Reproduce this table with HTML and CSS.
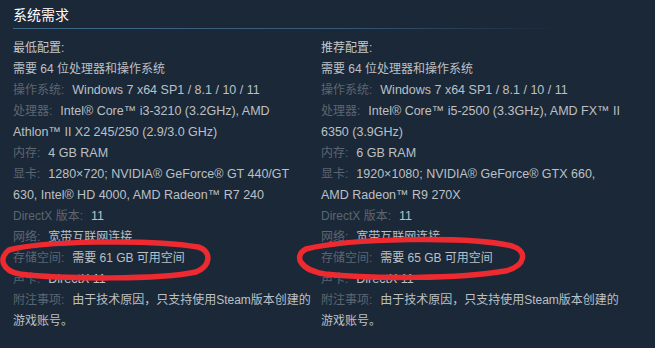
FILE: index.html
```html
<!DOCTYPE html>
<html lang="zh-CN">
<head>
<meta charset="utf-8">
<title>系统需求</title>
<link rel="stylesheet" href="styles.css">
</head>
<body>
<div class="sysreq">
  <h2 class="title">系统需求</h2>
  <div class="cols">
    <div class="col">
      <ul class="reqs">
        <li class="head">最低配置:</li>
        <li class="zh">需要 64 位处理器和操作系统</li>
        <li><span class="lbl">操作系统:</span> Windows 7 x64 SP1 / 8.1 / 10 / 11</li>
        <li><span class="lbl">处理器:</span> Intel® Core™ i3-3210 (3.2GHz), AMD Athlon™ II X2 245/250 (2.9/3.0 GHz)</li>
        <li><span class="lbl">内存:</span> 4 GB RAM</li>
        <li><span class="lbl">显卡:</span> 1280×720; NVIDIA® GeForce® GT 440/GT 630, Intel® HD 4000, AMD Radeon™ R7 240</li>
        <li><span class="lbl">DirectX 版本:</span> 11</li>
        <li class="zh"><span class="lbl">网络:</span> 宽带互联网连接</li>
        <li class="zh"><span class="lbl">存储空间:</span> 需要 61 GB 可用空间</li>
        <li><span class="lbl">声卡:</span> DirectX 11</li>
        <li class="zh"><span class="lbl">附注事项:</span> 由于技术原因，只支持使用Steam版本创建的游戏账号。</li>
      </ul>
    </div>
    <div class="col">
      <ul class="reqs">
        <li class="head">推荐配置:</li>
        <li class="zh">需要 64 位处理器和操作系统</li>
        <li><span class="lbl">操作系统:</span> Windows 7 x64 SP1 / 8.1 / 10 / 11</li>
        <li><span class="lbl">处理器:</span> Intel® Core™ i5-2500 (3.3GHz), AMD FX™ II 6350 (3.9GHz)</li>
        <li><span class="lbl">内存:</span> 6 GB RAM</li>
        <li><span class="lbl">显卡:</span> 1920×1080; NVIDIA® GeForce® GTX 660, AMD Radeon™ R9 270X</li>
        <li><span class="lbl">DirectX 版本:</span> 11</li>
        <li class="zh"><span class="lbl">网络:</span> 宽带互联网连接</li>
        <li class="zh"><span class="lbl">存储空间:</span> 需要 65 GB 可用空间</li>
        <li><span class="lbl">声卡:</span> DirectX 11</li>
        <li class="zh"><span class="lbl">附注事项:</span> 由于技术原因，只支持使用Steam版本创建的游戏账号。</li>
      </ul>
    </div>
  </div>
  <svg class="marks" width="655" height="348" viewBox="0 0 655 348" aria-hidden="true">
    <path d="M9 250 C 40 241, 150 239, 198 247 C 212 251, 211 266, 196 272 C 160 280, 60 279, 20 274 C 2 271, -2 258, 9 250 Z" />
    <path d="M306 249 C 350 238, 470 236, 512 246 C 528 251, 526 266, 505 271 C 460 279, 370 279, 325 274 C 300 270, 293 256, 306 249 Z" />
  </svg>
</div>
</body>
</html>
```

FILE: styles.css
```css
html, body {
  margin: 0;
  padding: 0;
  background: #1b2838;
}

.sysreq {
  position: relative;
  width: 655px;
  height: 348px;
  overflow: hidden;
  padding: 0 13px;
  box-sizing: border-box;
  font-family: "Liberation Sans", "Noto Sans CJK SC", sans-serif;
  font-size: 12.5px;
  color: #bcc0c5;
}

.title {
  margin: 0;
  padding: 6px 0 4px;
  width: 547px;
  font-size: 14px;
  font-weight: normal;
  line-height: 19px;
  color: #ffffff;
  background: linear-gradient(to right, #3f6a8a 0%, #36597a 60%, rgba(54, 89, 122, 0) 100%) no-repeat left bottom / 100% 1px;
}

.cols {
  display: flex;
  width: 616px;
  padding-top: 9px;
}

.col {
  width: 50%;
}

.reqs {
  list-style: none;
  margin: 0;
  padding: 0;
  width: 301px;
  line-height: 21px;
}

.head,
.zh {
  font-size: 12px;
}

.head {
  color: #c3c7cb;
}

.lbl {
  font-size: 12px;
  color: #5b6672;
  margin-right: 4.5px;
}

.marks {
  position: absolute;
  left: 0;
  top: 0;
  pointer-events: none;
}

.marks path {
  fill: none;
  stroke: #ec2a30;
  stroke-width: 5.5;
  stroke-linecap: round;
  stroke-linejoin: round;
}
```
